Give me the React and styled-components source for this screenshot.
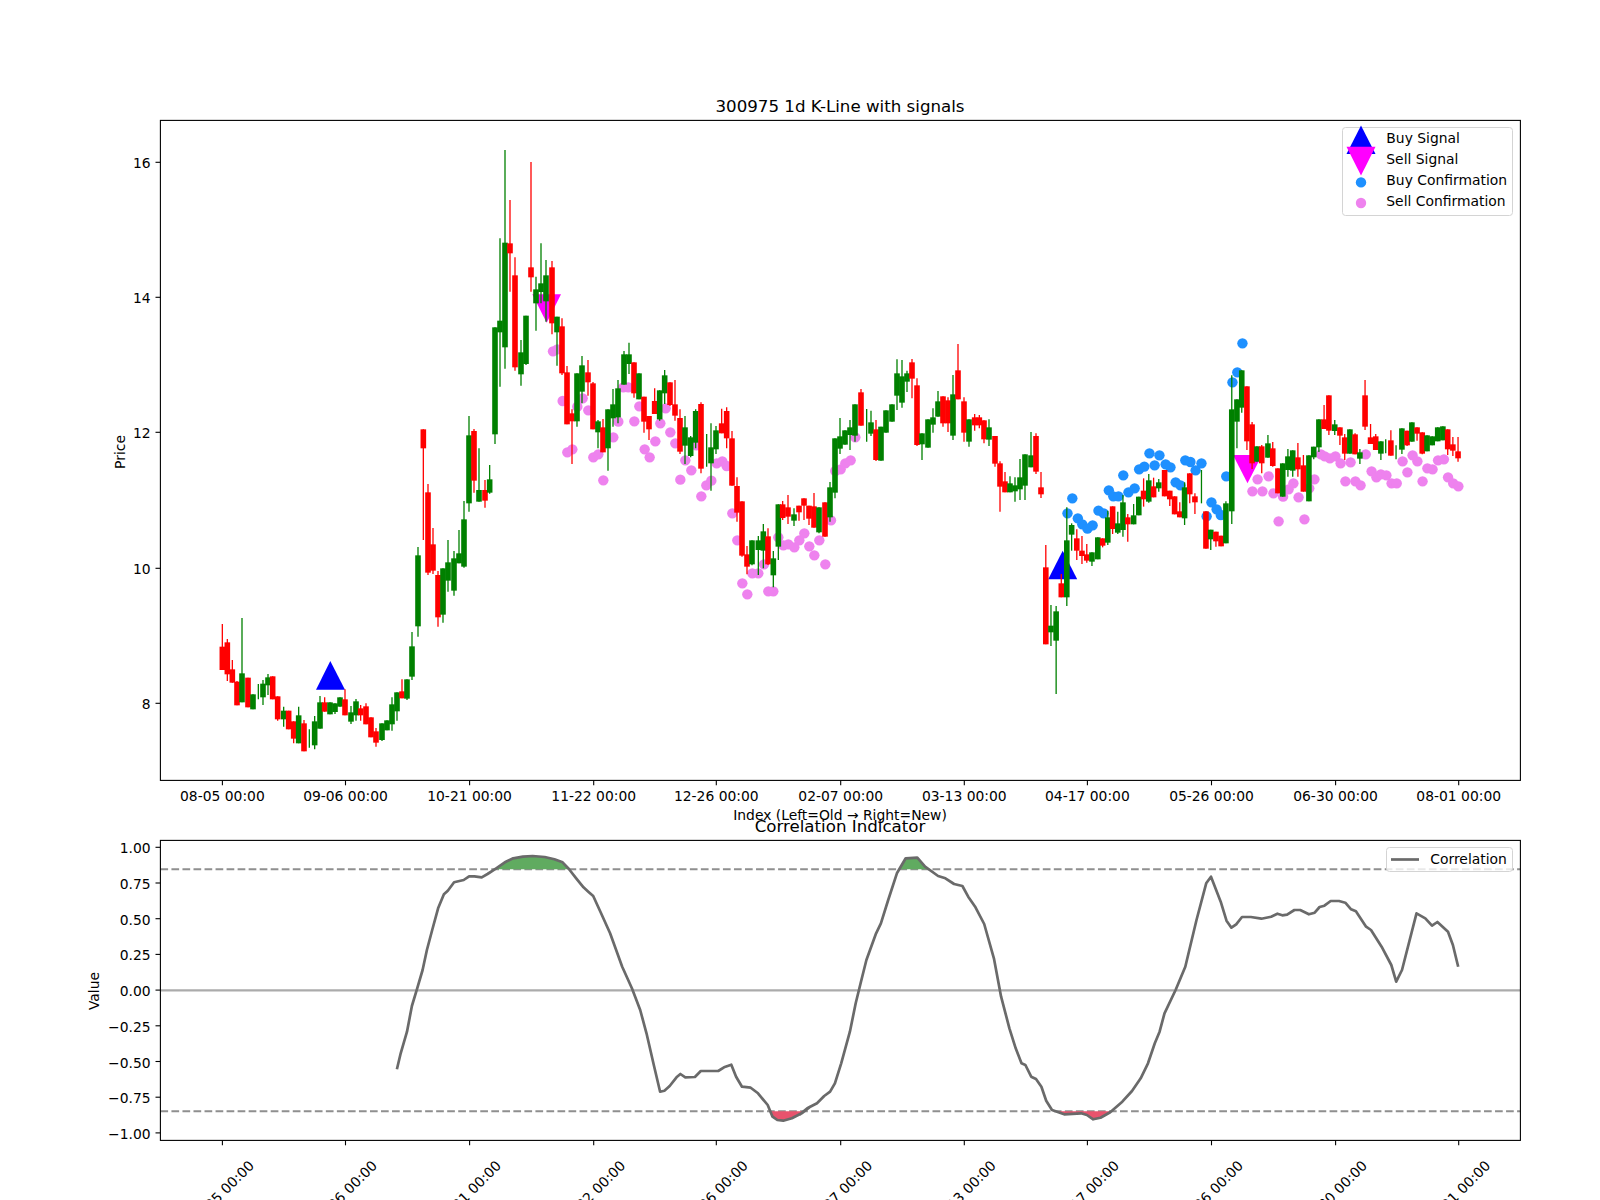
import React from 'react';
import styled, { createGlobalStyle } from 'styled-components';

const GlobalStyle = createGlobalStyle`
  html, body { margin: 0; padding: 0; background: #fff; overflow: hidden; }
  body { font-family: "DejaVu Sans", sans-serif; color: #000; }
`;

const Figure = styled.div`
  width: 1600px;
  height: 1200px;
  display: flex;
  flex-direction: column;
  padding-top: 94px;
  box-sizing: border-box;
  overflow: hidden;
`;
const Subplot = styled.section`
  position: relative;
  width: 1600px;
`;
const PlotTitle = styled.h2`
  margin: 0 0 0 160px;
  width: 1360px;
  height: ${p => 20 - p.$nudge}px;
  padding-top: ${p => p.$nudge}px;
  font-size: 16.67px;
  line-height: 20px;
  font-weight: 400;
  text-align: center;
  white-space: nowrap;
`;
const PlotSvg = styled.svg`
  display: block;
  width: 1600px;
  height: ${p => p.$height}px;
  overflow: visible;
`;
const Label = styled.text`
  font-family: "DejaVu Sans", sans-serif;
  font-size: 13.89px;
  fill: #000;
  text-anchor: ${p => p.$anchor || 'middle'};
`;
const Legend = styled.div`
  position: absolute;
  top: ${p => p.$top}px;
  right: 86.7px;
  width: ${p => p.$width}px;
  box-sizing: border-box;
  padding: ${p => p.$pad}px 4px ${p => p.$bottom}px;
  background: rgba(255, 255, 255, 0.8);
  border: 1px solid #d4d4d4;
  border-radius: 3.5px;
`;
const LegendRow = styled.div`
  display: flex;
  align-items: center;
  gap: 11px;
  height: 21px;
  font-size: 13.89px;
  line-height: 21px;
  white-space: nowrap;
`;
const LegendMark = styled.svg`
  flex: none;
  width: 28px;
  height: 21px;
  overflow: visible;
`;

const scale4 = 1568 / 540;
const scale6 = 1568 / 760;

// [x, colour, bodyTop, bodyBottom, wickTop, wickBottom] read off the chart
const candlesA = [
  [247,'r',590,660,522,660],[262,'r',577,673,567,693],[277,'r',658,698,630,698],[291,'r',695,766,693,766],
  [306,'g',670,757,504,757],[324,'r',683,772,683,772],[339,'g',733,778,733,778],[355,'g',725,725,702,748],
  [369,'g',701,742,690,765],[384,'g',682,706,672,735],[398,'r',679,748,679,748],[413,'r',739,808,739,812],
  [431,'g',782,808,770,830],[446,'r',782,838,782,838],[461,'r',814,866,814,880],[476,'g',796,880,770,880],
  [492,'r',820,904,810,904],[508,'g',860,860,838,893],[524,'g',814,886,798,898],[540,'g',757,836,738,836],
  [554,'r',757,785,742,785],[570,'g',757,793,757,793],[585,'g',760,786,760,792],[600,'g',742,770,742,770],
  [615,'r',748,796,718,796],[633,'g',787,815,768,822],[648,'g',754,796,747,812],[662,'r',775,796,765,812],
  [678,'r',769,823,760,823],[693,'r',802,862,802,862],[708,'r',844,878,834,890],[726,'g',820,870,820,873],
  [741,'g',811,841,811,841],[756,'g',763,823,742,842],[771,'g',727,784,727,812],[786,'r',724,745,688,745],
  [801,'g',688,746,688,750],[816,'g',589,680,546,690],[834,'g',316,529,291,560],[850,'r',-62,-5,-62,270],
  [864,'r',127,368,102,375],[879,'r',283,362,234,372],[894,'r',375,502,363,530],[909,'g',355,494,355,518],
  [924,'g',337,392,270,425],[942,'g',325,422,303,437],[957,'g',310,340,240,340],[972,'g',208,350,153,353],
  [987,'g',-44,160,-102,185],[1002,'r',-57,92,-63,128],[1017,'g',120,155,-5,155],[1035,'r',120,152,90,173],
  [1049,'g',88,128,45,131],
];
const candlesB = [
  [1065,'g',712,1033,712,1062],[1080,'g',692,727,445,890],[1095,'g',458,772,180,836],[1110,'r',460,490,330,605],
  [1125,'r',556,832,502,842],[1143,'g',787,853,750,887],[1158,'g',677,822,677,825],[1173,'r',532,562,216,605],
  [1188,'g',598,640,560,722],[1203,'g',580,606,460,640],[1218,'g',556,634,510,695],[1236,'r',532,700,513,733],
  [1251,'g',680,727,680,827],[1266,'r',709,850,685,855],[1281,'r',847,1003,828,1003],[1296,'r',970,994,958,1122],
  [1311,'g',850,994,850,1010],[1326,'g',826,905,798,940],[1344,'r',847,877,810,917],[1359,'r',880,1018,876,1018],
  [1374,'g',994,1027,990,1075],[1389,'r',1012,1087,987,1087],[1404,'g',958,1075,958,1142],[1419,'g',943,985,897,1010],
  [1434,'g',895,982,870,1000],[1452,'g',793,884,783,884],[1467,'g',793,822,758,852],[1482,'r',817,910,817,923],
  [1497,'g',850,928,850,928],
];
const candlesC = [
  [252,'r',290,365,290,398],[267,'r',348,388,348,420],[284,'r',303,342,265,342],[299,'g',271,358,271,362],
  [314,'g',226,280,210,312],[330,'r',247,315,247,318],[345,'r',313,347,240,362],[360,'r',354,455,328,462],
  [375,'g',382,437,348,492],[392,'g',412,468,408,472],[407,'g',333,428,328,445],[423,'r',312,506,307,520],
  [440,'g',450,450,402,500],[453,'g',442,490,370,572],[468,'g',391,448,378,462],[485,'r',370,400,326,400],
  [500,'r',333,415,322,445],[516,'r',415,557,393,557],[531,'r',558,638,532,665],[546,'r',604,767,604,770],
  [561,'r',763,800,738,823],[576,'g',721,793,721,796],[595,'g',721,750,708,825],[610,'g',694,752,672,805],
  [624,'r',709,793,685,795],[640,'g',775,826,753,862],[655,'g',613,740,613,780],[668,'r',613,654,603,660],
  [684,'r',622,650,585,672],[702,'g',643,662,625,678],[717,'r',617,637,617,662],[732,'r',595,617,595,660],
  [747,'r',617,656,617,675],[762,'r',619,683,579,683],[777,'g',622,697,622,700],[795,'r',607,710,607,710],
  [810,'g',562,652,546,665],[825,'g',415,578,415,595],[840,'g',409,446,354,462],[855,'g',391,434,391,434],
  [870,'g',382,405,360,450],[885,'g',313,407,313,425],[903,'r',277,377,267,377],[920,'g',380,380,327,425],
  [933,'g',367,401,332,408],[948,'r',388,480,360,483],[963,'g',380,482,380,482],[978,'g',331,398,331,398],
  [996,'g',313,365,313,365],[1011,'g',220,287,178,330],[1026,'g',229,308,180,323],[1041,'g',220,245,212,276],
  [1056,'r',187,236,177,295],[1071,'r',256,435,235,438],[1086,'g',400,433,400,480],[1104,'g',358,443,358,443],
  [1119,'g',352,374,325,398],[1134,'g',304,350,273,350],[1149,'r',289,370,289,380],[1164,'r',301,370,292,396],
  [1179,'g',283,407,225,420],[1194,'r',211,298,132,298],[1212,'r',304,398,292,425],[1227,'g',358,425,358,440],
  [1244,'r',352,376,342,392],[1258,'r',352,376,345,385],[1272,'r',361,418,361,430],[1287,'g',382,419,358,438],
  [1305,'r',408,491,408,500],[1320,'r',490,560,484,635],[1335,'r',544,577,516,577],[1350,'g',550,577,529,577],
  [1365,'g',556,574,532,605],[1380,'g',532,568,477,600],[1395,'g',463,557,463,600],[1413,'g',466,502,396,502],
  [1428,'r',408,515,400,522],[1443,'r',562,583,516,594],
];
const candlesD = [
  [133,'r',742,973,675,973],[148,'g',917,937,855,978],[163,'g',874,962,858,1122],[178,'r',790,832,762,832],
  [194,'g',661,832,562,858],[208,'g',615,644,610,692],[223,'r',655,692,628,720],[238,'r',692,708,648,732],
  [252,'r',703,722,672,728],[267,'g',697,725,697,738],[284,'g',652,718,652,718],[298,'r',655,677,655,682],
  [313,'g',592,668,572,675],[327,'r',559,627,559,642],[342,'g',610,638,575,642],[357,'g',547,630,525,650],
  [371,'r',592,613,582,665],[388,'g',586,613,552,613],[403,'g',530,586,530,586],[417,'r',512,538,475,560],
  [432,'g',481,545,462,548],[446,'r',499,532,473,532],[461,'g',487,505,477,515],[478,'r',450,529,450,529],
  [493,'r',512,538,512,558],[507,'r',529,583,529,583],[522,'r',574,592,547,592],[536,'g',502,595,487,615],
  [551,'r',460,523,460,550],[566,'r',529,547,520,582],[585,'g',500,500,450,550],[598,'r',574,686,574,686],
  [612,'g',629,658,629,690],[627,'r',635,664,635,680],[642,'r',647,679,647,679],[656,'g',550,670,544,670],
  [673,'g',268,574,166,612],[688,'g',238,305,238,385],[702,'g',151,263,151,278],[717,'r',199,364,199,390],
  [732,'r',313,430,306,447],[746,'g',379,425,379,425],[760,'r',379,430,375,460],[778,'g',370,413,345,413],
  [792,'r',385,438,366,440],[807,'r',445,520,445,520],[821,'g',430,530,430,530],[836,'g',409,450,387,470],
  [850,'g',391,452,391,470],[865,'r',412,448,369,470],[881,'r',436,515,405,515],[897,'g',406,544,406,544],
  [911,'g',380,412,380,418],[926,'g',298,382,298,396],[941,'r',298,327,255,327],[955,'r',226,332,226,345],
  [972,'g',313,333,300,345],[987,'r',322,347,322,375],[1001,'r',352,401,342,420],[1016,'g',328,401,328,401],
  [1031,'r',343,403,340,403],[1045,'g',397,416,387,432],[1060,'r',226,320,180,330],[1076,'r',352,372,312,372],
  [1091,'r',349,390,342,390],[1106,'g',364,401,364,420],[1120,'g',380,380,358,400],[1135,'r',361,407,331,407],
  [1150,'g',400,400,376,418],[1167,'g',325,389,325,402],[1182,'r',332,376,332,378],[1196,'g',307,365,307,365],
  [1211,'r',322,341,322,362],[1226,'r',337,401,337,403],[1240,'g',346,394,346,394],[1255,'g',349,376,349,376],
  [1271,'g',322,364,322,364],[1286,'g',319,361,319,361],[1300,'r',328,388,328,405],[1315,'r',373,392,351,408],
  [1330,'r',394,415,351,425],
];

const sellDots1 = [[1239,784],[1252,778]];
const sellDots3 = [
  [8,303],[22,457],[37,448],[52,320],[68,295],[85,331],[100,472],[115,463],[130,541],[160,412],[175,365],[190,262],
  [205,262],[223,364],[238,319],[254,448],[269,472],[286,424],[301,370],[317,325],[331,397],[346,430],[361,539],
  [376,481],[394,511],[409,436],[424,589],[439,556],[454,542],[470,490],[487,484],[500,498],[517,640],[532,721],
  [547,850],[562,883],[577,820],[595,820],[612,793],[625,874],[640,874],[655,712],[670,736],[685,733],[703,742],
  [718,721],[733,700],[748,739],[763,766],[778,721],[796,793],[813,661],[826,513],[842,508],[856,490],[872,481],[886,412],
];
const sellDots4 = [
  [733,514],[748,478],[762,514],[780,469],[794,520],[822,530],[838,508],[852,490],[867,532],[884,598],[809,604],
  [898,505],[913,478],[932,403],[943,409],[958,415],[974,409],[989,430],[1003,484],[1018,427],[1032,484],[1047,496],
  [1062,403],[1079,454],[1093,472],[1106,463],[1122,466],[1137,490],[1152,490],[1169,424],[1183,457],[1198,406],
  [1212,424],[1227,484],[1241,445],[1256,448],[1272,421],[1289,418],[1301,472],[1316,490],[1331,499],
];
const buyDots4 = [
  [196,580],[210,535],[226,595],[239,613],[254,626],[269,616],[286,572],[301,580],[316,511],[329,529],[344,529],
  [358,466],[373,517],[391,505],[404,448],[419,440],[434,400],[449,436],[463,406],[481,433],[495,442],[510,487],
  [524,496],[538,421],[553,426],[568,451],[585,430],[600,589],[614,547],[629,568],[641,585],[657,469],[675,187],
  [689,157],[704,70],
];

const corrLeft = [
  [695,898],[703,850],[716,785],[726,708],[737,655],[748,600],[757,540],[768,480],[780,415],[792,373],[800,362],
  [813,337],[833,330],[844,319],[855,319],[870,322],[882,312],[900,295],[920,275],[935,265],[955,260],[975,258],
  [1000,261],[1020,268],[1037,277],[1050,297],[1065,325],[1080,352],[1090,365],[1100,378],[1115,425],[1135,490],
  [1160,590],[1180,655],[1197,720],[1210,790],[1225,885],[1238,965],[1247,962],[1258,948],[1272,922],[1280,912],
  [1290,922],[1310,921],[1322,903],[1358,903],[1370,892],[1385,884],[1395,920],[1407,950],[1425,953],[1440,970],
  [1460,1005],[1470,1040],[1480,1050],[1492,1052],[1510,1045],[1530,1030],[1548,1010],
];
const corrRight = [
  [0,1033],[15,1015],[35,1000],[50,978],[62,965],[72,940],[85,880],[103,785],[115,700],[125,640],[137,570],[157,490],
  [167,460],[182,390],[200,310],[218,265],[242,263],[258,290],[285,318],[300,325],[318,342],[335,348],[347,380],
  [362,412],[380,462],[400,565],[415,680],[432,775],[445,835],[457,880],[465,885],[477,920],[487,927],[498,950],
  [508,992],[520,1020],[545,1033],[580,1030],[592,1035],[605,1048],[620,1043],[640,1027],[665,995],[685,963],
  [703,925],[718,880],[732,820],[742,785],[752,730],[775,660],[795,590],[818,450],[838,340],[848,320],[868,395],
  [880,452],[890,473],[900,463],[912,441],[930,441],[952,446],[972,440],[985,431],[995,436],[1005,434],[1020,420],
  [1032,420],[1050,433],[1062,428],[1072,411],[1082,407],[1095,393],[1112,393],[1125,398],[1137,418],[1147,424],
  [1168,470],[1178,480],[1200,530],[1220,585],[1230,635],[1242,600],[1272,430],[1290,445],[1304,467],[1315,456],
  [1337,485],[1347,525],[1358,590],
];

const place = (ox, oy, sx) => ([x, c, t, b, wt, wb]) => ({
  x: ox + x / sx, c, t: oy + t / 3, b: oy + b / 3, wt: oy + wt / 3, wb: oy + wb / 3,
});
const candles = [
  ...candlesA.map(place(140, 450, 3)),
  ...candlesB.map(place(140, 90, 3)),
  ...candlesC.map(place(560, 300, 3)),
  ...candlesD.map(place(1000, 320, scale4)),
];
const dot = (ox, oy, sx) => ([x, y]) => [ox + x / sx, oy + y / 3];
const sellDots = [
  ...sellDots1.map(dot(140, 90, 3)),
  ...sellDots3.map(dot(560, 300, 3)),
  ...sellDots4.map(dot(1000, 320, scale4)),
];
const buyDots = buyDots4.map(dot(1000, 320, scale4));
const corr = [
  ...corrLeft.map(dot(60, 770, scale6)),
  ...corrRight.map(dot(800, 770, scale6)),
];

const xTicks = [222.4, 345.5, 469.6, 593.7, 716.3, 840.7, 964.3, 1087.4, 1211.5, 1335.6, 1458.7];
const mainDates = ['08-05', '09-06', '10-21', '11-22', '12-26', '02-07', '03-13', '04-17', '05-26', '06-30', '08-01'];
const priceTicks = [[16, 162.3], [14, 297.3], [12, 432.3], [10, 568.3], [8, 703.3]];
const valueTicks = ['1.00', '0.75', '0.50', '0.25', '0.00', '\u22120.25', '\u22120.50', '\u22120.75', '\u22121.00'];
const valueY = i => 847.3 + i * 35.7;

const HI = 869.2;
const LO = 1111.2;

// pieces of the line beyond a level, closed along that level
function bands(points, level, above) {
  const out = [];
  let cur = null;
  const beyond = y => (above ? y < level : y > level);
  points.forEach(([x, y], i) => {
    if (beyond(y)) {
      if (!cur) {
        const prev = points[i - 1];
        const sx = prev ? prev[0] + ((level - prev[1]) / (y - prev[1])) * (x - prev[0]) : x;
        cur = [[sx, level]];
      }
      cur.push([x, y]);
    } else if (cur) {
      const prev = points[i - 1];
      cur.push([prev[0] + ((level - prev[1]) / (y - prev[1])) * (x - prev[0]), level]);
      out.push(cur);
      cur = null;
    }
  });
  return out;
}
const toPts = list => list.map(p => p[0].toFixed(1) + ',' + p[1].toFixed(1)).join(' ');

const Candle = ({ x, c, t, b, wt, wb }) => {
  const colour = c === 'r' ? '#ff0000' : '#008000';
  return (
    <g>
      <line x1={x} x2={x} y1={wt} y2={wb} stroke={colour} strokeWidth="1.3" />
      {b > t && <rect x={x - 2.8} y={t} width="5.6" height={b - t} fill={colour} />}
    </g>
  );
};

const Frame = ({ top, bottom }) => (
  <rect x="160.4" y={top} width="1360" height={bottom - top} fill="none" stroke="#000" strokeWidth="1.1" />
);

const MainChart = () => (
  <PlotSvg $height={702} viewBox="0 114 1600 702">
    {sellDots.map(([x, y], i) => <circle key={i} cx={x} cy={y} r="5.2" fill="#ee82ee" />)}
    {buyDots.map(([x, y], i) => <circle key={i} cx={x} cy={y} r="5.2" fill="#1e90ff" />)}
    <polygon points="330.3,661 316,689.7 345,689.7" fill="#0000ff" />
    <polygon points="1062.7,550.7 1048.2,579.3 1077.2,579.3" fill="#0000ff" />
    <polygon points="532.3,294.3 561,294.3 546.7,322.7" fill="#ff00ff" />
    <polygon points="1233,455 1262,455 1247.5,483.3" fill="#ff00ff" />
    {candles.map((c, i) => <Candle key={i} {...c} />)}
    <Frame top={120.4} bottom={780.4} />
    {xTicks.map((x, i) => (
      <g key={x}>
        <line x1={x} x2={x} y1="780.4" y2="785.3" stroke="#000" strokeWidth="1.1" />
        <Label x={x} y="801">{mainDates[i]} 00:00</Label>
      </g>
    ))}
    {priceTicks.map(([v, y]) => (
      <g key={v}>
        <line x1="155.5" x2="160.4" y1={y} y2={y} stroke="#000" strokeWidth="1.1" />
        <Label x="150.6" y={y + 6} $anchor="end">{v}</Label>
      </g>
    ))}
    <Label transform="translate(125 452) rotate(-90)">Price</Label>
    <Label x="840" y="820">Index (Left=Old → Right=New)</Label>
  </PlotSvg>
);

const CorrelationChart = () => (
  <PlotSvg $height={364} viewBox="0 836 1600 364">
    <line x1="160.4" x2="1520.4" y1={HI} y2={HI} stroke="#8f8f8f" strokeWidth="2.08" strokeDasharray="7.7 3.33" />
    <line x1="160.4" x2="1520.4" y1={LO} y2={LO} stroke="#8f8f8f" strokeWidth="2.08" strokeDasharray="7.7 3.33" />
    <line x1="160.4" x2="1520.4" y1="990.3" y2="990.3" stroke="#ababab" strokeWidth="2.2" />
    {bands(corr, HI, true).map((b, i) => <polygon key={i} points={toPts(b)} fill="#60ab60" />)}
    {bands(corr, LO, false).map((b, i) => <polygon key={i} points={toPts(b)} fill="#e8536d" />)}
    <polyline points={toPts(corr)} fill="none" stroke="#6a6a6a" strokeWidth="2.7" strokeLinejoin="round" />
    <Frame top={840.4} bottom={1140.4} />
    {xTicks.map((x, i) => (
      <g key={x}>
        <line x1={x} x2={x} y1="1140.4" y2="1145.3" stroke="#000" strokeWidth="1.1" />
        <Label transform={`translate(${x - 1} 1193) rotate(-45)`} dy="5">{mainDates[i]} 00:00</Label>
      </g>
    ))}
    {valueTicks.map((v, i) => (
      <g key={v}>
        <line x1="155.5" x2="160.4" y1={valueY(i)} y2={valueY(i)} stroke="#000" strokeWidth="1.1" />
        <Label x="150.6" y={valueY(i) + 6} $anchor="end">{v}</Label>
      </g>
    ))}
    <Label transform="translate(99 991) rotate(-90)">Value</Label>
  </PlotSvg>
);

const App = () => (
  <>
    <GlobalStyle />
    <Figure>
      <Subplot>
        <PlotTitle $nudge={3}>300975 1d K-Line with signals</PlotTitle>
        <MainChart />
        <Legend $top={33.3} $width={171} $pad={0} $bottom={2.4}>
          <LegendRow>
            <LegendMark viewBox="-14 -10.5 28 21"><polygon points="0,-13.1 -14.5,15.5 14.5,15.5" fill="#0000ff" /></LegendMark>
            Buy Signal
          </LegendRow>
          <LegendRow>
            <LegendMark viewBox="-14 -10.5 28 21"><polygon points="-14.5,-12.8 14.5,-12.8 0,15.9" fill="#ff00ff" /></LegendMark>
            Sell Signal
          </LegendRow>
          <LegendRow>
            <LegendMark viewBox="-14 -10.5 28 21"><circle cx="0" cy="1.9" r="5.2" fill="#1e90ff" /></LegendMark>
            Buy Confirmation
          </LegendRow>
          <LegendRow>
            <LegendMark viewBox="-14 -10.5 28 21"><circle cx="0" cy="1.5" r="5.2" fill="#ee82ee" /></LegendMark>
            Sell Confirmation
          </LegendRow>
        </Legend>
      </Subplot>
      <Subplot>
        <PlotTitle $nudge={1}>Correlation Indicator</PlotTitle>
        <CorrelationChart />
        <Legend $top={31.3} $width={127} $pad={1} $bottom={1}>
          <LegendRow>
            <LegendMark viewBox="-14 -10.5 28 21"><line x1="-14" x2="14" y1="0" y2="0" stroke="#6a6a6a" strokeWidth="2.7" /></LegendMark>
            Correlation
          </LegendRow>
        </Legend>
      </Subplot>
    </Figure>
  </>
);

export default App;
